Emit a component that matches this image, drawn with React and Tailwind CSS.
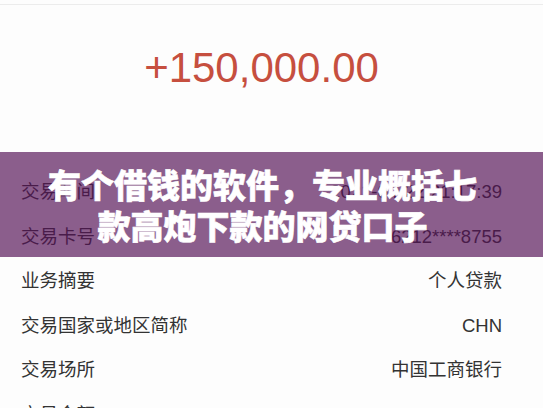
import React from "react";

const rows = [
  { label: "交易时间", value: "2021-04-22 21:17:39" },
  { label: "交易卡号", value: "6212****8755" },
  { label: "业务摘要", value: "个人贷款" },
  { label: "交易国家或地区简称", value: "CHN" },
  { label: "交易场所", value: "中国工商银行" },
  { label: "交易金额", value: "150,000.00" },
];

const App = () => {
  return (
    <div
      className="relative w-[543px] h-[408px] overflow-hidden bg-[#fdfdfd] text-[#333333]"
      style={{ fontFamily: '"Liberation Sans", "Noto Sans CJK SC", sans-serif' }}
    >
      {/* top divider */}
      <div className="h-[4px]" />
      <div className="border-t border-[#ececec]" />

      {/* amount */}
      <div className="h-[165px] pt-[38px] pr-[20px] text-center">
        <p className="text-[42px] leading-[50px] text-[#c64f3f]">+150,000.00</p>
      </div>

      {/* detail rows */}
      <div className="flex flex-col">
        {rows.map((row) => (
          <div
            key={row.label}
            className="h-[44.5px] flex items-center justify-between pl-[21px] pr-[41px] text-[18.5px]"
          >
            <span>{row.label}</span>
            <span>{row.value}</span>
          </div>
        ))}
      </div>

      {/* title banner over the content */}
      <div className="absolute left-0 right-0 top-[152px] h-[105px] pr-[18px] flex items-center justify-center bg-[rgba(84,17,86,0.68)]">
        <h1
          className="text-center text-white text-[33px] leading-[41px] font-black [-webkit-text-stroke:0.6px_white]"
          style={{ fontFamily: '"Noto Sans CJK SC", sans-serif' }}
        >
          有个借钱的软件，专业概括七
          <br />
          款高炮下款的网贷口子
        </h1>
      </div>
    </div>
  );
};

export default App;
